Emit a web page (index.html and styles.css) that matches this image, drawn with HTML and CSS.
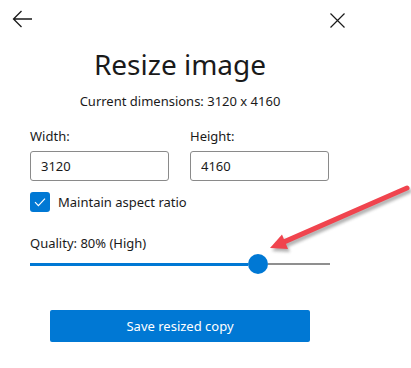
FILE: index.html
```html
<!DOCTYPE html>
<html lang="en">
<head>
  <meta charset="UTF-8">
  <title>Resize image</title>
  <meta name="viewport" content="width=device-width, initial-scale=1.0">
  <link rel="stylesheet" href="styles.css">
</head>
<body>
  <div class="panel">
    <div class="topbar">
      <button class="icon-btn back" aria-label="Back">
        <svg width="20" height="18" viewBox="0 0 20 18">
          <path d="M20 9H1.5M9.5 1L1.5 9l8 8" fill="none" stroke="#1a1a1a" stroke-width="1.3"/>
        </svg>
      </button>
      <button class="icon-btn close" aria-label="Close">
        <svg width="15" height="15" viewBox="0 0 15 15">
          <path d="M0.5 0.5l14 14M14.5 0.5l-14 14" fill="none" stroke="#1a1a1a" stroke-width="1.2"/>
        </svg>
      </button>
    </div>

    <div class="content">
      <h1>Resize image</h1>
      <p class="current">Current dimensions: 3120 x 4160</p>

      <div class="fields">
        <div class="field">
          <label for="w">Width:</label>
          <input type="text" id="w" value="3120">
        </div>
        <div class="field">
          <label for="h">Height:</label>
          <input type="text" id="h" value="4160">
        </div>
      </div>

      <div class="check-row">
        <span class="checkbox">
          <svg width="12" height="10" viewBox="0 0 12 10">
            <path d="M1 5.2l3.4 3.4L11 1.6" fill="none" stroke="#fff" stroke-width="1.2"/>
          </svg>
        </span>
        <span>Maintain aspect ratio</span>
      </div>

      <div class="quality">Quality: 80% (High)</div>
      <div class="slider">
        <div class="fill"></div>
        <div class="thumb"></div>
        <div class="rest"></div>
      </div>

      <button class="save">Save resized copy</button>
    </div>
  </div>

  <!-- annotation arrow -->
  <svg class="pointer" width="151" height="85" viewBox="0 0 151 85">
    <defs>
      <filter id="blur"><feGaussianBlur stdDeviation="1.6"/></filter>
    </defs>
    <g filter="url(#blur)" opacity="0.45" transform="translate(2,3)">
      <path d="M147 13L24.7 66.6" stroke="#555" stroke-width="5" stroke-linecap="round"/>
      <polygon points="10,73 28,74 22,59.5" fill="#555"/>
    </g>
    <path d="M147 13L24.7 66.6" stroke="#f0444e" stroke-width="5" stroke-linecap="round"/>
    <polygon points="10,73 28,74 22,59.5" fill="#f0444e"/>
  </svg>
</body>
</html>
```

FILE: styles.css
```css
body {
  margin: 0;
  background: #fff;
  font-family: 'Noto Sans', 'Open Sans', sans-serif;
  color: #1a1a1a;
  width: 411px;
  height: 368px;
  overflow: hidden;
}
.panel {
  width: 360px;
}
.topbar {
  display: flex;
  justify-content: space-between;
  align-items: flex-start;
  padding: 10px 15px 0 12px;
  height: 28px;
}
.icon-btn {
  background: none;
  border: none;
  padding: 0;
  display: block;
}
.close {
  margin-top: 3px;
}
.content {
  width: 300px;
  margin-left: 30px;
}
h1 {
  margin: 6px 0 0;
  font-weight: 400;
  font-size: 28px;
  line-height: 40px;
  text-align: center;
}
.current {
  margin: 8px 0 0;
  font-size: 13px;
  line-height: 18px;
  text-align: center;
}
.fields {
  display: flex;
  gap: 21px;
  margin-top: 17px;
}
.field {
  flex: 0 0 139px;
}
label {
  display: block;
  font-size: 13px;
  line-height: 18px;
}
input {
  width: 139px;
  height: 30px;
  margin-top: 6px;
  box-sizing: border-box;
  border: 1px solid #8a8a8a;
  border-radius: 3px;
  padding: 0 10px;
  font: inherit;
  font-size: 13px;
  color: #1a1a1a;
}
.check-row {
  display: flex;
  align-items: center;
  gap: 8px;
  margin-top: 11px;
  font-size: 13px;
}
.checkbox {
  width: 20px;
  height: 20px;
  border-radius: 3px;
  background: #0078d4;
  display: flex;
  align-items: center;
  justify-content: center;
}
.quality {
  margin-top: 22px;
  font-size: 13px;
  line-height: 18px;
}
.slider {
  display: flex;
  align-items: center;
  height: 20px;
  margin-top: 2px;
}
.fill {
  width: 218px;
  height: 3px;
  background: #0078d4;
}
.thumb {
  width: 20px;
  height: 20px;
  border-radius: 50%;
  background: #0078d4;
}
.rest {
  flex: 1;
  height: 2px;
  background: #8f8f8f;
}
.save {
  display: block;
  width: 260px;
  height: 32px;
  margin: 36px auto 0;
  border: none;
  border-radius: 2px;
  background: #0078d4;
  color: #fff;
  font: inherit;
  font-size: 13px;
}
.pointer {
  position: absolute;
  left: 260px;
  top: 175px;
}
```
